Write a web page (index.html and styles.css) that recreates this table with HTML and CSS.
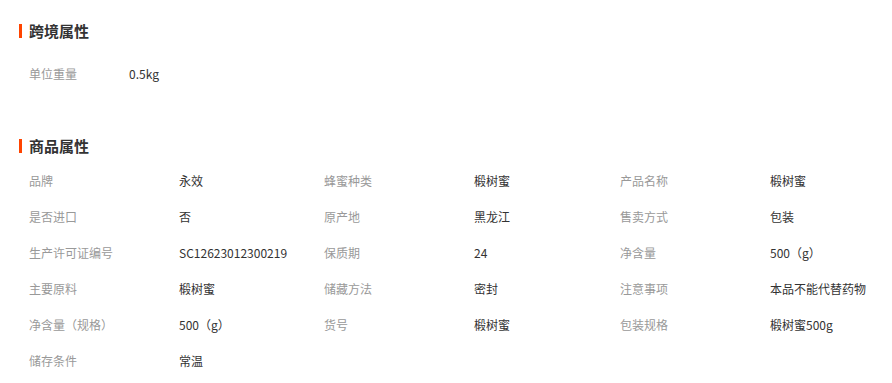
FILE: index.html
```html
<!DOCTYPE html>
<html lang="zh-CN">
<head>
<meta charset="utf-8">
<link rel="stylesheet" href="styles.css">
</head>
<body>
<div class="page">
  <section class="block">
    <h2 class="block-title">跨境属性</h2>
    <div class="cross-list">
      <div class="cross-row"><span class="label cross-label">单位重量</span><span class="value">0.5kg</span></div>
    </div>
  </section>
  <section class="block block-goods">
    <h2 class="block-title">商品属性</h2>
    <div class="attr-grid">
      <div class="cell"><span class="label">品牌</span><span class="value">永效</span></div>
      <div class="cell"><span class="label">蜂蜜种类</span><span class="value">椴树蜜</span></div>
      <div class="cell"><span class="label">产品名称</span><span class="value">椴树蜜</span></div>
      <div class="cell"><span class="label">是否进口</span><span class="value">否</span></div>
      <div class="cell"><span class="label">原产地</span><span class="value">黑龙江</span></div>
      <div class="cell"><span class="label">售卖方式</span><span class="value">包装</span></div>
      <div class="cell"><span class="label">生产许可证编号</span><span class="value">SC12623012300219</span></div>
      <div class="cell"><span class="label">保质期</span><span class="value">24</span></div>
      <div class="cell"><span class="label">净含量</span><span class="value">500（g）</span></div>
      <div class="cell"><span class="label">主要原料</span><span class="value">椴树蜜</span></div>
      <div class="cell"><span class="label">储藏方法</span><span class="value">密封</span></div>
      <div class="cell"><span class="label">注意事项</span><span class="value">本品不能代替药物</span></div>
      <div class="cell"><span class="label">净含量（规格）</span><span class="value">500（g）</span></div>
      <div class="cell"><span class="label">货号</span><span class="value">椴树蜜</span></div>
      <div class="cell"><span class="label">包装规格</span><span class="value">椴树蜜500g</span></div>
      <div class="cell"><span class="label">储存条件</span><span class="value">常温</span></div>
    </div>
  </section>
</div>
</body>
</html>
```
FILE: styles.css
```css
* { box-sizing: border-box; }
html, body { margin: 0; padding: 0; background: #fff; }
body {
  font-family: "Microsoft YaHei", "Noto Sans CJK SC", "Noto Sans", sans-serif;
  font-size: 12px;
  color: #333;
}
.page { padding: 21px 0 0 19px; }
.block-title {
  display: flex;
  align-items: center;
  margin: 0;
  height: 20px;
  line-height: 20px;
  font-size: 15px;
  font-weight: bold;
  color: #333;
}
.block-title::before {
  content: "";
  width: 3px;
  height: 14px;
  background: #ff4400;
  margin-right: 7px;
}
.cross-list { padding-left: 10px; margin-top: 14px; }
.cross-row { display: flex; align-items: center; height: 36px; }
.cross-label { width: 100px; }
.block-goods { margin-top: 45px; }
.attr-grid {
  display: grid;
  grid-template-columns: 295px 296px 270px;
  grid-auto-rows: 36px;
  padding-left: 10px;
  margin-top: 6px;
}
.cell { display: flex; align-items: center; }
.label { color: #999; flex: none; }
.cell .label { width: 150px; }
.value { color: #333; white-space: nowrap; }
```
